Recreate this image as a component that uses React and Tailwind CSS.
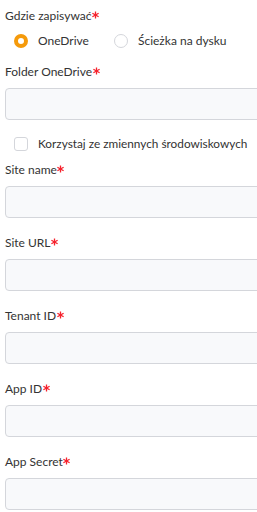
import React from 'react';

function Asterisk() {
    return (
        <svg width="7" height="8" viewBox="0 0 7 8" className="inline-block ml-[0.5px] align-[1px]">
            <g stroke="#f5222d" strokeWidth="1.3" strokeLinecap="butt">
                <line x1="3.5" y1="0.5" x2="3.5" y2="7.5" />
                <line x1="0.4" y1="2.2" x2="6.6" y2="5.8" />
                <line x1="0.4" y1="5.8" x2="6.6" y2="2.2" />
            </g>
        </svg>
    );
}

function Label({ children }) {
    return (
        <div className="h-[16px] text-[12px] leading-[16px] text-[#333] whitespace-nowrap">
            {children}
            <Asterisk />
        </div>
    );
}

function Field({ label, className = '' }) {
    return (
        <div className={`flex flex-col ${className}`}>
            <Label>{label}</Label>
            <div className="mt-[8px] w-[290px] h-[32px] shrink-0 rounded-[4px] border border-[#d4d6db] bg-[#f8f9fb]" />
        </div>
    );
}

export default function App() {
    return (
        <div
            className="w-[257px] h-[512px] overflow-hidden bg-white pl-[5px] pt-[8px]"
            style={{ fontFamily: 'Lato, "Noto Sans", sans-serif' }}
        >
            <Label>Gdzie zapisywać</Label>

            {/* Radio group */}
            <div className="flex items-center mt-[9px] pl-[9px] h-[16px] whitespace-nowrap">
                <div className="flex items-center">
                    <span className="w-[14px] h-[14px] shrink-0 rounded-full border-[4px] border-[#f59a0b] bg-white" />
                    <span className="ml-[10px] text-[12px] text-[#333]">OneDrive</span>
                </div>
                <div className="flex items-center ml-[25px]">
                    <span className="w-[14px] h-[14px] shrink-0 rounded-full border border-[#d4d6db] bg-white" />
                    <span className="ml-[10px] text-[12px] text-[#333]">Ścieżka na dysku</span>
                </div>
            </div>

            <Field label="Folder OneDrive" className="mt-[15px]" />

            {/* Env checkbox */}
            <div className="flex items-center mt-[17px] pl-[9px] h-[14px] whitespace-nowrap">
                <span className="w-[14px] h-[14px] shrink-0 rounded-[3px] border border-[#d4d6db] bg-white" />
                <span className="ml-[10px] text-[11.8px] text-[#333]">Korzystaj ze zmiennych środowiskowych</span>
            </div>

            <Field label="Site name" className="mt-[11px]" />
            <Field label="Site URL" className="mt-[17px]" />
            <Field label="Tenant ID" className="mt-[17px]" />
            <Field label="App ID" className="mt-[17px]" />
            <Field label="App Secret" className="mt-[17px]" />
        </div>
    );
}
